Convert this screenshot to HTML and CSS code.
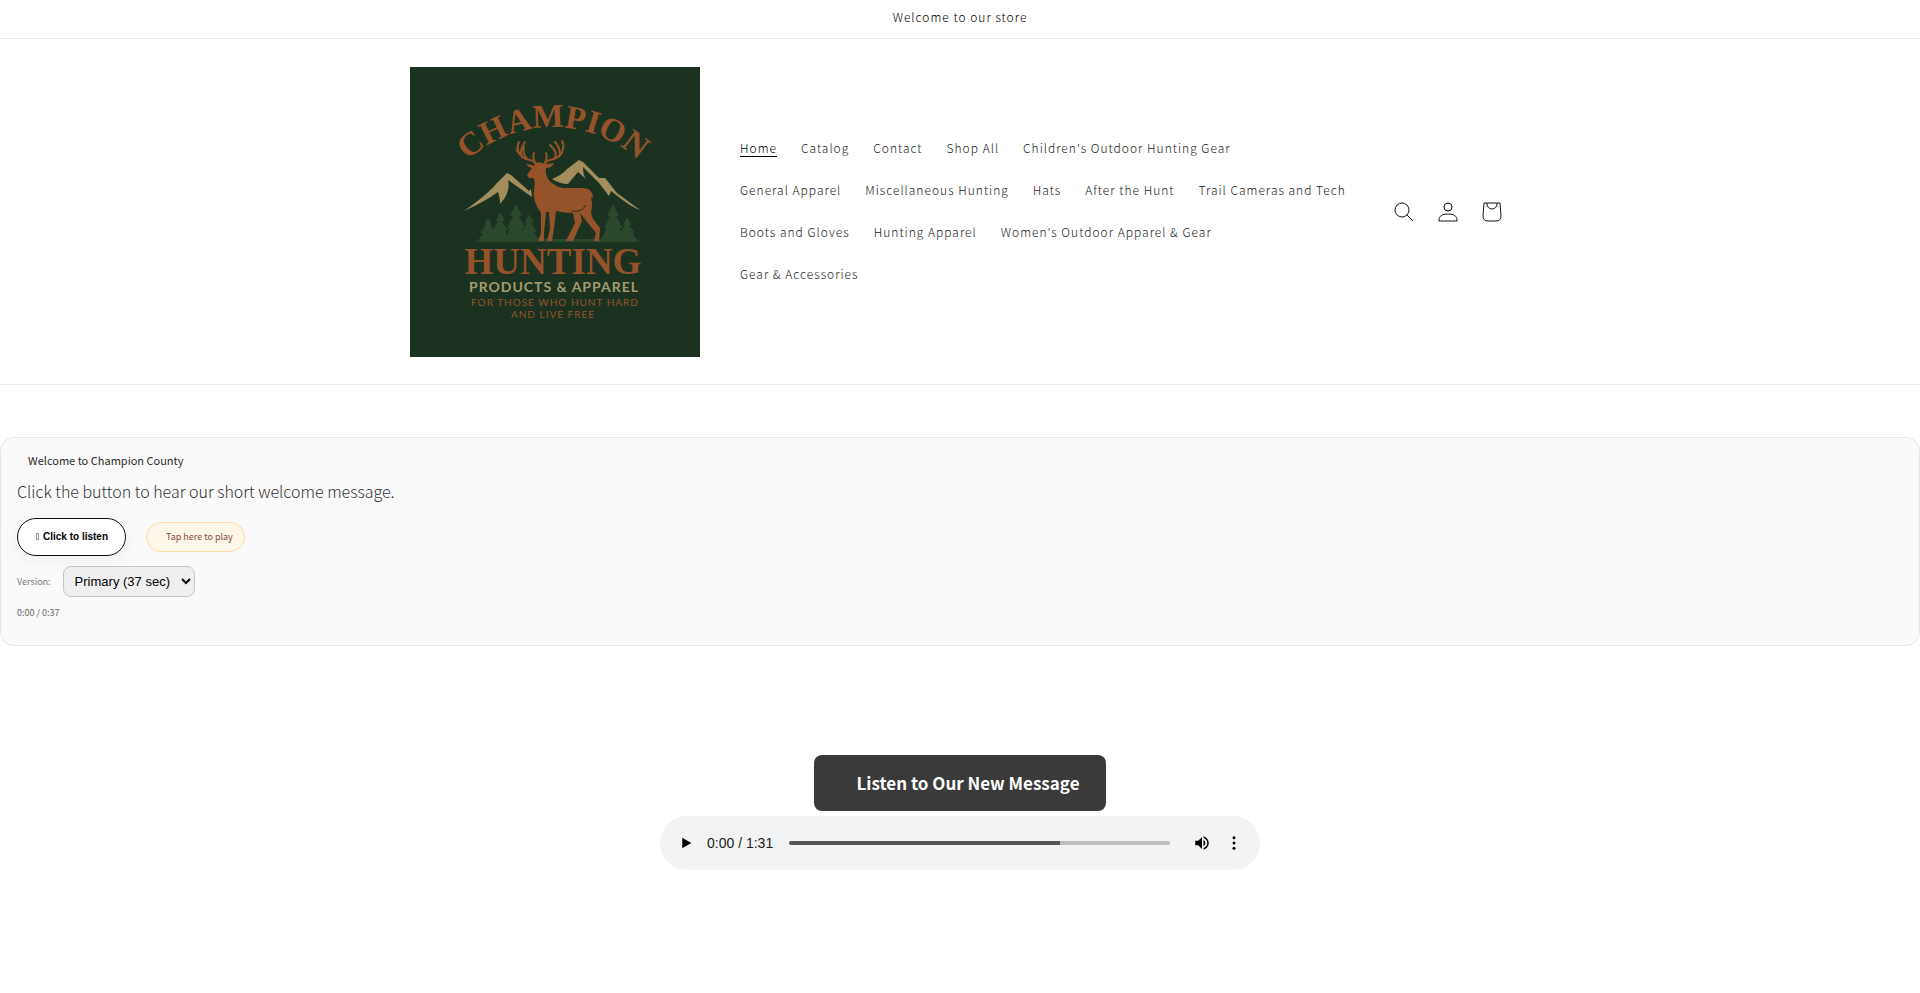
FILE: index.html
```html
<!DOCTYPE html>
<html lang="en">
<head>
  <meta charset="utf-8">
  <meta name="viewport" content="width=device-width, initial-scale=1">
  <title>Champion Hunting Products &amp; Apparel</title>
  <link rel="stylesheet" href="styles.css">
</head>
<body>
  <div class="announcement">
    <p>Welcome to our store</p>
  </div>

  <header class="header">
    <div class="header-inner">
      <a href="#" class="logo" aria-label="Champion Hunting Products and Apparel">
        <svg viewBox="0 0 290 290">
          <rect width="290" height="290" fill="#1b3221"/>
          <path id="arch" d="M56 95 A126 126 0 0 1 230 95" fill="none"/>
          <text class="logo-arch"><textPath href="#arch" startOffset="50%">CHAMPION</textPath></text>

          <!-- mountains -->
          <path fill="#a28d5d" d="M54 144 Q78 127 86 117 L97 106 L101 108 L119 124 L121 122 L122 130 L98 113 Q101 125 90 137 Q90 130 88 125 Q76 134 54 144 Z"/>
          <path fill="#a28d5d" d="M142 112 Q152 108 157 102 L169 93 L173 95 L189 111 L195 111 L207 126 L230 143 Q222 141 201 124 L199 129 L189 116 L173 100 Q173 108 176 112 L168 105 L158 117 Q150 117 142 112 Z"/>

          <!-- trees -->
          <g fill="#29482c">
            <path d="M78 151 L82 158 L80 158 L86 166 L83 166 L88 174 L68 174 L73 166 L70 166 L76 158 L74 158 Z"/>
            <path d="M90 145 L95 154 L92 154 L98 164 L95 164 L101 174 L79 174 L85 164 L82 164 L88 154 L86 154 Z"/>
            <path d="M106 137 L112 149 L109 149 L115 161 L112 161 L119 174 L94 174 L100 161 L97 161 L103 149 L100 149 Z"/>
            <path d="M119 147 L124 156 L121 156 L127 165 L124 165 L129 174 L109 174 L115 165 L112 165 L117 156 L115 156 Z"/>
            <path d="M203 137 L209 149 L206 149 L213 161 L209 161 L217 174 L190 174 L197 161 L194 161 L200 149 L197 149 Z"/>
            <path d="M217 150 L222 158 L219 158 L225 166 L222 166 L228 174 L207 174 L213 166 L210 166 L215 158 L213 158 Z"/>
            <path d="M60 175 L90 172 L200 172 L234 175 Z"/>
          </g>

          <!-- deer -->
          <g fill="none" stroke="#96532a" stroke-width="2" stroke-linecap="round">
            <path d="M126 97 Q123 93 116 92 Q108 88 108 82 Q107 78 109 75"/>
            <path d="M110 87 Q107 85 107 82 M112 90 Q109 83 115 75 M117 92 Q112 86 114 80 M125 95 Q122 91 124 86"/>
            <path d="M134 97 Q137 93 144 92 Q152 89 153 82 Q154 77 152 74"/>
            <path d="M150 88 Q150 80 145 75 M144 92 Q149 86 140 78 M135 95 Q138 91 136 86"/>
          </g>
          <path fill="#96532a" d="M125 96 Q130 94 134 97 Q139 97 144 96 Q142 101 136 101 Q135 106 138 112 Q143 119 153 121 L174 121 Q183 122 183 131 L181 130 Q183 138 181 146 L183 152 L190 161 L189 174 L184 174 L186 166 L174 151 L170 146 L172 154 L163 174 L156 174 L165 156 L163 146 Q154 146 146 144 L144 161 L142 174 L137 174 L140 162 L139 145 L136 145 L134 166 L134 174 L128 174 L131 166 L131 146 Q122 134 124 122 Q126 113 123 111 L119 111 L117 108 L122 101 Q118 100 116 97 Q121 97 124 99 Z"/>
          <path fill="none" stroke="#1b3221" d="M162 144 Q171 146 176 138"/>

          <text class="logo-name" x="143" y="207">HUNTING</text>
          <text class="logo-line" x="144" y="225">PRODUCTS &amp; APPAREL</text>
          <text class="logo-motto" x="145" y="239">FOR THOSE WHO HUNT HARD</text>
          <text class="logo-motto" x="143" y="251">AND LIVE FREE</text>
        </svg>
      </a>

      <nav>
        <ul class="menu">
          <li><a href="#" class="active">Home</a></li>
          <li><a href="#">Catalog</a></li>
          <li><a href="#">Contact</a></li>
          <li><a href="#">Shop All</a></li>
          <li><a href="#">Children's Outdoor Hunting Gear</a></li>
          <li><a href="#">General Apparel</a></li>
          <li><a href="#">Miscellaneous Hunting</a></li>
          <li><a href="#">Hats</a></li>
          <li><a href="#">After the Hunt</a></li>
          <li><a href="#">Trail Cameras and Tech</a></li>
          <li><a href="#">Boots and Gloves</a></li>
          <li><a href="#">Hunting Apparel</a></li>
          <li><a href="#">Women's Outdoor Apparel &amp; Gear</a></li>
          <li><a href="#">Gear &amp; Accessories</a></li>
        </ul>
      </nav>

      <div class="header-icons">
        <button type="button" aria-label="Search">
          <svg viewBox="0 0 20 20"><circle cx="8" cy="8" r="7"/><path d="M13 13 L19 19"/></svg>
        </button>
        <a href="#" aria-label="Log in">
          <svg viewBox="0 0 20 20"><circle cx="10" cy="5" r="4"/><path d="M1 19 V18 C1 14 4 12 10 12 S19 14 19 18 V19 Z"/></svg>
        </a>
        <a href="#" aria-label="Cart">
          <svg viewBox="0 0 20 20"><path d="M2 1 H18 L19 14 Q19 19 14 19 H6 Q1 19 1 14 Z M5 1 V2 A5 5 0 0 0 15 2 V1"/></svg>
        </a>
      </div>
    </div>
  </header>

  <main>
    <section class="welcome">
      <h2>Welcome to Champion County</h2>
      <p class="welcome-text">Click the button to hear our short welcome message.</p>
      <div class="row">
        <button type="button" class="listen-btn"><span class="glyph"></span>Click to listen</button>
        <span class="hint">Tap here to play</span>
      </div>
      <div class="row version">
        <label for="version">Version:</label>
        <select id="version">
          <option>Primary (37 sec)</option>
        </select>
      </div>
      <p class="time">0:00 / 0:37</p>
    </section>

    <section class="message">
      <button type="button" class="message-btn">Listen to Our New Message</button>
      <div class="player">
        <button type="button" aria-label="Play">
          <svg viewBox="0 0 24 24"><path d="M7 5v14l12-7z"/></svg>
        </button>
        <span class="player-time">0:00 / 1:31</span>
        <input type="range" min="0" max="91" value="0" aria-label="Seek">
        <button type="button" aria-label="Mute">
          <svg viewBox="0 0 24 24"><path d="M3 9v6h4l5 5V4L7 9H3zm13.500 3c0-1.770-1.020-3.290-2.500-4.030v8.050c1.480-.73 2.500-2.250 2.500-4.020zM14 3.230v2.060c2.890.86 5 3.540 5 6.710s-2.110 5.850-5 6.710v2.060c4.010-.91 7-4.490 7-8.770s-2.990-7.860-7-8.770z"/></svg>
        </button>
        <button type="button" aria-label="More options">
          <svg viewBox="0 0 24 24"><circle cx="12" cy="5" r="2"/><circle cx="12" cy="12" r="2"/><circle cx="12" cy="19" r="2"/></svg>
        </button>
      </div>
    </section>
  </main>
</body>
</html>
```
FILE: styles.css
```css
* {
  margin: 0;
  padding: 0;
  box-sizing: border-box;
}
body {
  font-family: "Noto Sans CJK SC", "Open Sans", sans-serif;
  font-size: 12px;
  font-weight: 300;
  color: #414141;
  background: #fff;
}
button {
  border: none;
  background: transparent;
  cursor: pointer;
}

/* header */
.announcement {
  padding: 7px 9px 11px;
  border-bottom: 1px solid #e7e7e7;
  text-align: center;
  line-height: 20px;
  letter-spacing: 1px;
  color: #000;
}
.header {
  border-bottom: 1px solid #ececec;
}
.header-inner {
  display: flex;
  align-items: center;
  max-width: 1200px;
  margin: 0 auto;
  padding: 28px 46px 27px 50px;
}
.logo svg {
  display: block;
  width: 290px;
}
.logo-arch,
.logo-name {
  font-family: "Liberation Serif", serif;
  font-weight: bold;
  text-anchor: middle;
  fill: #96532a;
}
.logo-arch {
  font-size: 33px;
}
.logo-name {
  font-size: 37px;
}
.logo-line,
.logo-motto {
  font-family: Lato, sans-serif;
  letter-spacing: 1px;
  text-anchor: middle;
}
.logo-line {
  font-size: 14px;
  font-weight: bold;
  fill: #a49c6c;
}
.logo-motto {
  font-size: 10px;
  font-weight: normal;
  fill: #96532a;
}
nav {
  flex: 1;
  padding: 0 20px 0 28px;
}
.menu {
  display: flex;
  flex-wrap: wrap;
  list-style: none;
}
.menu a {
  display: block;
  padding: 11px 12px 13px;
  line-height: 18px;
  letter-spacing: 1px;
  color: #222;
  text-decoration: none;
}
.menu .active {
  color: #000;
  text-decoration: underline;
  text-underline-offset: 3px;
}
.header-icons {
  display: flex;
}
.header-icons a,
.header-icons button {
  display: flex;
  align-items: center;
  justify-content: center;
  width: 44px;
  height: 44px;
}
.header-icons svg {
  width: 20px;
  height: 20px;
  fill: none;
  stroke: #121212;
}

/* welcome card */
.welcome {
  margin-top: 52px;
  padding: 12px 16px 24px;
  border: 1px solid #e6e6e6;
  border-radius: 14px;
  background: #fafafa;
}
.welcome h2 {
  padding-left: 11px;
  font-size: 11px;
  font-weight: normal;
  line-height: 20px;
  color: #2b2b2b;
}
.welcome-text {
  margin: 8px 0 14px;
  font-size: 16px;
  line-height: 26px;
  color: #333;
}
.row {
  display: flex;
  align-items: center;
  gap: 20px;
}
.listen-btn {
  padding: 12px 17px 12px 18px;
  border: 1px solid #111;
  border-radius: 20px;
  background: #fff;
  box-shadow: 0 4px 20px rgba(0,0,0,0.05);
  font-family: "Liberation Sans", sans-serif;
  font-size: 10px;
  font-weight: bold;
  line-height: 12px;
}
.glyph {
  display: inline-block;
  width: 3px;
  height: 7px;
  margin-right: 4px;
  border: 1px solid #999;
}
.hint {
  padding: 6px 11px 6px 19px;
  border: 1px solid #ffd9a8;
  border-radius: 15px;
  background: #fff6ea;
  font-size: 9px;
  font-weight: normal;
  line-height: 16px;
  color: #8a4b3a;
}
.version {
  gap: 12px;
  margin-top: 10px;
  font-size: 9px;
  font-weight: normal;
  color: #777;
}
.version select {
  padding: 6px 7px;
  border: 1px solid #c4c4c4;
  border-radius: 8px;
  background: #efefef;
  font-family: "Liberation Sans", sans-serif;
  font-size: 13px;
}
.time {
  margin-top: 8px;
  font-size: 9px;
  font-weight: normal;
  line-height: 16px;
  color: #666;
}

/* message player */
.message {
  display: flex;
  flex-direction: column;
  align-items: center;
  gap: 5px;
  margin-top: 109px;
}
.message-btn {
  padding: 14px 26px 14px 42px;
  border-radius: 8px;
  background: #3a3a3a;
  font-family: inherit;
  font-size: 17px;
  font-weight: bold;
  line-height: 28px;
  color: #fff;
}
.player {
  display: flex;
  align-items: center;
  width: 100%;
  max-width: 600px;
  height: 54px;
  padding: 0 10px;
  border-radius: 27px;
  background: #f1f3f4;
}
.player button {
  width: 32px;
  height: 32px;
}
.player svg {
  display: block;
  width: 18px;
  margin: 0 auto;
}
.player-time {
  margin: 0 16px 0 5px;
  font-family: "Liberation Sans", sans-serif;
  font-size: 14px;
  font-weight: normal;
  color: #202020;
}
.player input {
  flex: 1;
  min-width: 0;
  height: 4px;
  margin-right: 16px;
  border-radius: 2px;
  background: linear-gradient(to right, #555 71%, #bfbfbf 71%);
  appearance: none;
}
.player input::-webkit-slider-thumb {
  appearance: none;
  width: 0;
  height: 0;
}
```
